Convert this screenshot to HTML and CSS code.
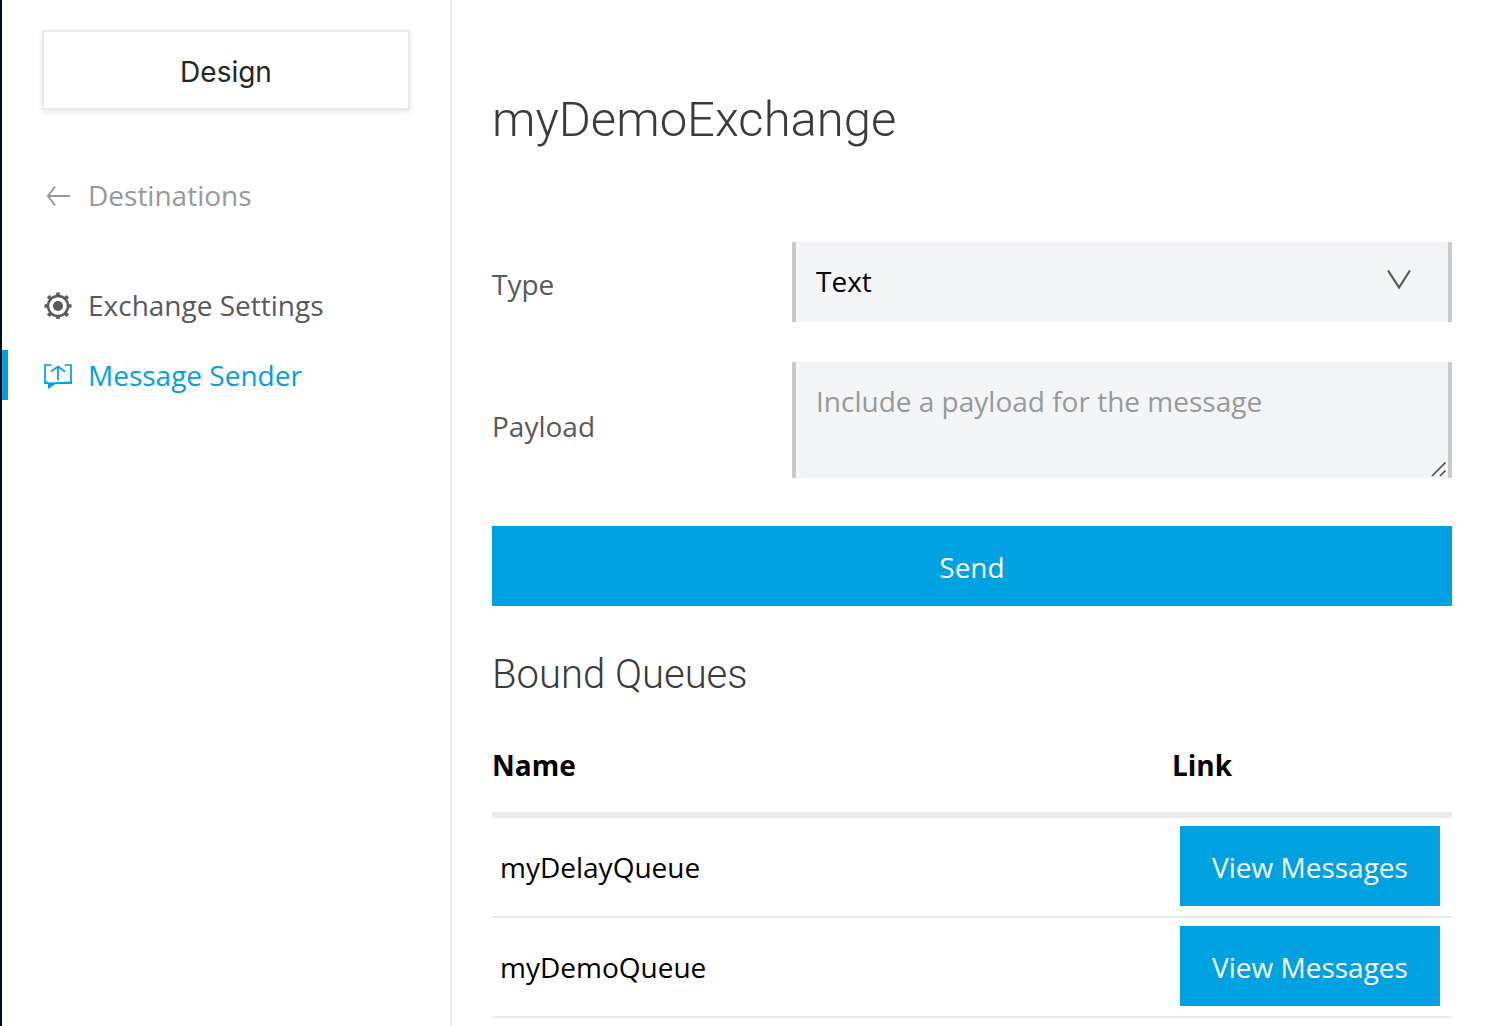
FILE: index.html
```html
<!DOCTYPE html>
<html lang="en">
<head>
<meta charset="utf-8">
<title>myDemoExchange</title>
<link rel="stylesheet" href="styles.css">
</head>
<body>
<div class="app">
  <aside class="sidebar">
    <button class="design" type="button">Design</button>
    <a class="nav-link back" href="#destinations">
      <svg class="icon" viewBox="0 0 28 28" fill="none" stroke="currentColor"><path d="M26 15H4M11 5.500L4 15l7 9.500" stroke-width="2"/></svg>
      Destinations
    </a>
    <nav class="nav">
      <a class="nav-link" href="#settings">
        <svg class="icon" viewBox="0 -1 28 28" fill="none" stroke="currentColor"><circle cx="14" cy="14" r="10" stroke-width="2.400"/><circle cx="14" cy="14" r="5" fill="currentColor" stroke="none"/><path d="M14 .5V4M14 24v3M.5 14H4M24 14h3.500M4.200 4.200l2.600 2.600M21.200 21.200l2.600 2.600M4.200 23.800l2.600-2.600M21.200 6.800l2.600-2.600" stroke-width="3.600"/></svg>
        Exchange Settings
      </a>
      <a class="nav-link active" href="#sender">
        <svg class="icon" viewBox="0 -1 28 28" fill="none" stroke="currentColor" stroke-width="1.700"><path d="M7.500 3H1v18M20.500 3H27v18"/><path d="M14 18.500V4.500M7 9.500l7-5 7 5"/><path d="M.3 18.500L5 20.500l23-1V22H11.500L4 27v-5H.3z" fill="currentColor" stroke="none"/></svg>
        Message Sender
      </a>
    </nav>
  </aside>
  <main class="main">
    <h1 class="title">myDemoExchange</h1>
    <form class="form">
      <label class="label" for="type">Type</label>
      <div class="field">
        <select class="control select" id="type"><option>Text</option></select>
        <svg class="chevron" viewBox="0 0 24 20" fill="none" stroke="#58595b" stroke-width="2.200"><path d="M1 .5l11 17L23 .5"/></svg>
      </div>
      <label class="label" for="payload">Payload</label>
      <div class="field">
        <textarea class="control textarea" id="payload" placeholder="Include a payload for the message"></textarea>
        <svg class="grip" viewBox="0 0 16 16" fill="none" stroke="#4f5153" stroke-width="1.700"><path d="M1 14L14.500 .5M9 14l5.500-5.500"/></svg>
      </div>
      <button class="button send" type="button">Send</button>
    </form>
    <h2 class="subtitle">Bound Queues</h2>
    <table class="queues">
      <thead><tr><th>Name</th><th class="link-col">Link</th></tr></thead>
      <tbody>
        <tr><td>myDelayQueue</td><td><button class="button view" type="button">View Messages</button></td></tr>
        <tr><td>myDemoQueue</td><td><button class="button view" type="button">View Messages</button></td></tr>
      </tbody>
    </table>
  </main>
</div>
</body>
</html>
```
FILE: styles.css
```css
* { box-sizing: border-box; }

body {
  margin: 0;
  background: #fff;
  color: #000;
  font: 28px/40px "Open Sans", sans-serif;
}

button, select, textarea { font: inherit; border-radius: 0; margin: 0; }

.app {
  display: flex;
  min-height: 100vh;
  border-left: 2px solid #000b18;
}

.sidebar {
  flex: 0 0 450px;
  padding-top: 30px;
  border-right: 2px solid #e8e9ea;
}

.design {
  display: block;
  width: 368px;
  height: 80px;
  margin: 0 40px 60px;
  padding: 4px 0 0;
  background: #fff;
  border: 2px solid #e8e9ea;
  box-shadow: 0 2px 6px rgba(0, 0, 0, 0.1);
  color: #262626;
  font-family: Inter, sans-serif;
}

.nav { margin-top: 60px; }

.nav-link {
  display: flex;
  align-items: center;
  gap: 16px;
  height: 50px;
  margin-bottom: 20px;
  padding-left: 42px;
  color: #58595b;
  text-decoration: none;
}

.back { color: #97999b; }

.active {
  padding-left: 36px;
  border-left: 6px solid #00a1e0;
  color: #00a1e0;
}

.icon { width: 28px; height: 28px; flex: none; }

.main { flex: 1; min-width: 0; padding: 88px 34px 8px 40px; }

.title, .subtitle {
  margin: 0;
  color: #3a3b3c;
  font-family: Roboto, sans-serif;
  font-weight: 300;
}

.title { font-size: 49px; line-height: 64px; }

.subtitle { margin-top: 44px; font-size: 40px; line-height: 50px; }

.form {
  display: grid;
  grid-template-columns: 300px 1fr;
  row-gap: 40px;
  margin-top: 90px;
}

.label { padding-top: 22px; color: #58595b; }

.label[for="payload"] { align-self: end; padding-bottom: 32px; }

.field { position: relative; display: flex; }

.control {
  width: 100%;
  padding: 19px 20px;
  border: 0 solid #c8c9cb;
  border-width: 0 4px;
  background: #f3f4f6;
  color: #000;
}

.select { height: 80px; padding: 0 20px 2px; appearance: none; }

.textarea { display: block; height: 116px; resize: none; overflow: hidden; }
.textarea::placeholder { color: #97999b; opacity: 1; }

.chevron { position: absolute; top: 28px; right: 41px; width: 24px; height: 20px; pointer-events: none; }

.grip { position: absolute; right: 5px; bottom: 0; width: 16px; height: 16px; pointer-events: none; }

.button {
  height: 80px;
  padding: 2px 0 0;
  border: 0;
  background: #00a1e0;
  color: #fff;
}

.send { grid-column: 1 / -1; margin-top: 8px; }

.view { display: block; width: 260px; }

.queues {
  width: 100%;
  margin-top: 24px;
  border-collapse: separate;
  border-spacing: 0;
  table-layout: fixed;
}

.queues th {
  height: 94px;
  padding: 0 0 6px;
  border-bottom: 6px solid #e8e9ea;
  text-align: left;
}

.link-col { width: 280px; }

.queues td {
  height: 100px;
  padding: 8px 8px 10px;
  border-bottom: 2px solid #e8e9ea;
}

.queues td:first-child { padding-bottom: 8px; }
```
